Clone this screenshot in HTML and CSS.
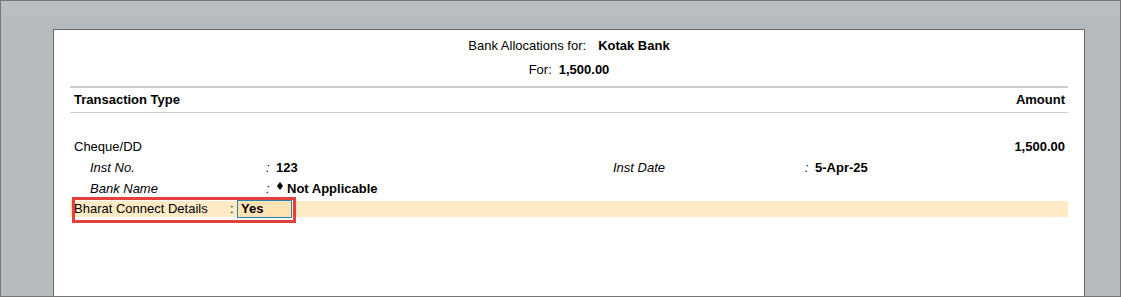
FILE: index.html
```html
<!DOCTYPE html>
<html>
<head>
<meta charset="utf-8">
<link rel="stylesheet" href="styles.css">
</head>
<body>
<div class="frame">
  <div class="panel">
    <div class="title">
      <div class="title-row">Bank Allocations for:<b class="gap-l">Kotak Bank</b></div>
      <div class="title-row">For:<b class="gap-s">1,500.00</b></div>
    </div>
    <div class="rule-thick"></div>
    <div class="head-row">
      <span>Transaction Type</span>
      <span>Amount</span>
    </div>
    <div class="rule-thin"></div>
    <div class="type-row">
      <span>Cheque/DD</span>
      <b>1,500.00</b>
    </div>
    <div class="detail-row">
      <i>Inst No.</i><i class="colon">:</i><b>123</b>
      <i>Inst Date</i><i class="colon">:</i><b>5-Apr-25</b>
    </div>
    <div class="detail-row">
      <i>Bank Name</i><i class="colon">:</i>
      <span class="val"><svg class="diamond" width="6" height="8" viewBox="0 0 6 8"><polygon points="3,0 6,4 3,8 0,4" fill="#000"/></svg><b>Not Applicable</b></span>
    </div>
    <div class="bc-row">
      <span class="bc-label">Bharat Connect Details</span>
      <span class="bc-colon">:</span>
      <span class="bc-box"><b>Yes</b></span>
      <div class="highlight-box"></div>
    </div>
  </div>
</div>
</body>
</html>
```
FILE: styles.css
```css
html, body {
  margin: 0;
  padding: 0;
}
body {
  width: 1121px;
  height: 297px;
  overflow: hidden;
  font-family: "Liberation Sans", Arial, sans-serif;
  font-size: 13px;
  color: #000;
}
.frame {
  box-sizing: border-box;
  width: 1121px;
  height: 297px;
  border: 1px solid #777;
  background: linear-gradient(#b8bec1 0, #b8bec1 15px, #b4babd 15px);
  padding: 28px 35px 0 52px;
  display: flex;
}
.panel {
  flex: 1;
  background: #fff;
  border: 1px solid #6a6a6a;
  border-bottom: none;
  padding: 4px 16px 0 16px;
  display: flex;
  flex-direction: column;
}
b { font-weight: bold; }
i { font-style: italic; }
.title-row {
  height: 24px;
  line-height: 24px;
  text-align: center;
}
.gap-l { margin-left: 12px; }
.gap-s { margin-left: 7px; }
.rule-thick {
  margin-top: 4px;
  height: 2px;
  background: #cbcbcb;
}
.head-row {
  height: 24px;
  line-height: 24px;
  display: flex;
  justify-content: space-between;
  padding: 0 3px 0 4px;
  font-weight: bold;
}
.rule-thin {
  height: 1px;
  background: #d0d0d0;
}
.type-row {
  margin-top: 23px;
  height: 21px;
  line-height: 21px;
  display: flex;
  justify-content: space-between;
  padding: 0 3px 0 4px;
}
.detail-row {
  height: 21px;
  line-height: 21px;
  display: grid;
  grid-template-columns: 175px 11px 337px 191px 11px auto;
  padding-left: 20px;
}
.colon { padding-left: 1px; }
.val {
  display: flex;
  align-items: center;
  gap: 4px;
}
.diamond {
  position: relative;
  top: -3px;
  margin-left: 1px;
}
.bc-row {
  position: relative;
  margin-top: 2px;
  height: 16px;
  line-height: 16px;
  background: #feebc6;
  display: flex;
  align-items: center;
  padding-left: 4px;
}
.bc-label { width: 156px; }
.bc-colon { width: 7px; }
.bc-box {
  box-sizing: border-box;
  width: 55px;
  height: 18px;
  line-height: 16px;
  border: 1px solid #2b80b9;
  background: #fde3b2;
  padding-left: 3px;
}
.highlight-box {
  position: absolute;
  left: 2px;
  top: -4px;
  width: 224px;
  height: 26px;
  box-sizing: border-box;
  border: 3px solid #e4403e;
}
```
